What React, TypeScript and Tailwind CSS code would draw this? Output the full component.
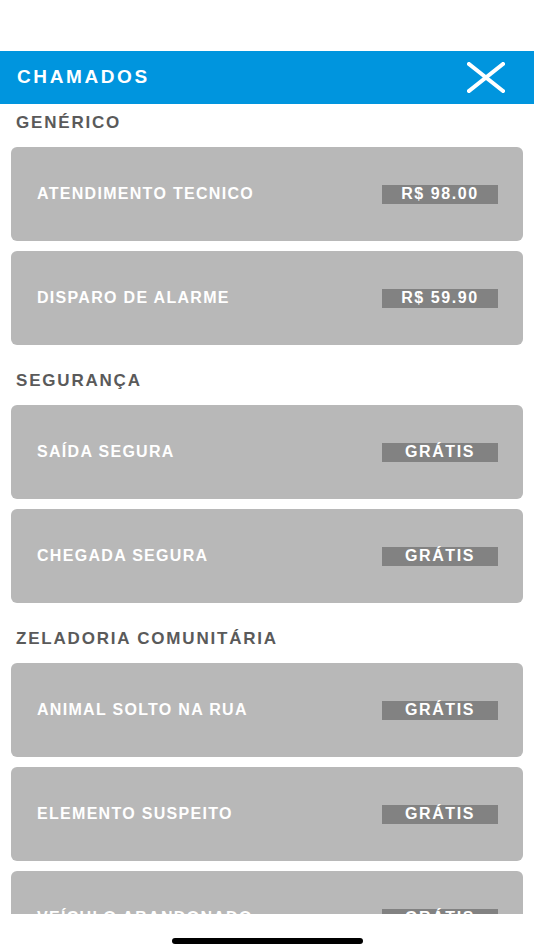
const sections = [
  {
    title: "GENÉRICO",
    items: [
      { name: "ATENDIMENTO TECNICO", price: "R$ 98.00" },
      { name: "DISPARO DE ALARME", price: "R$ 59.90" },
    ],
  },
  {
    title: "SEGURANÇA",
    items: [
      { name: "SAÍDA SEGURA", price: "GRÁTIS" },
      { name: "CHEGADA SEGURA", price: "GRÁTIS" },
    ],
  },
  {
    title: "ZELADORIA COMUNITÁRIA",
    items: [
      { name: "ANIMAL SOLTO NA RUA", price: "GRÁTIS" },
      { name: "ELEMENTO SUSPEITO", price: "GRÁTIS" },
      { name: "VEÍCULO ABANDONADO", price: "GRÁTIS" },
    ],
  },
];

export default function App() {
  return (
    <div
      className="relative h-[950px] w-[534px] overflow-hidden bg-white"
      style={{ fontFamily: '"Liberation Sans", Arial, sans-serif' }}
    >
      {/* status bar space */}
      <div className="h-[51px]" />

      {/* header */}
      <div className="flex h-[53px] items-center justify-between bg-[#0095de] pl-[17px] pr-[29px]">
        <h1 className="text-[19px] font-bold tracking-[2.6px] text-white">CHAMADOS</h1>
        <svg width="38" height="31" viewBox="0 0 38 31" fill="none">
          <path d="M2 2L36 29M36 2L2 29" stroke="white" strokeWidth="4" strokeLinecap="square" />
        </svg>
      </div>

      {/* list */}
      <div className="flex flex-col px-[11px] pt-[7px]">
        {sections.map((s, i) => (
          <div key={s.title} className={i === 0 ? "" : "mt-[24px]"}>
            <div className="h-[24px] pl-[5px] text-[17px] leading-[24px] font-bold tracking-[1.8px] text-[#5a5a5a]">
              {s.title}
            </div>
            <div className="mt-[12px] flex flex-col gap-[10px]">
              {s.items.map((it) => (
                <div
                  key={it.name}
                  className="flex h-[94px] items-center justify-between rounded-[6px] bg-[#b8b8b8] pl-[26px] pr-[25px]"
                >
                  <span className="text-[16px] font-bold tracking-[1.3px] text-white">{it.name}</span>
                  <span className="flex h-[19px] w-[116px] items-center justify-center bg-[#828282] text-[16px] font-bold tracking-[1.6px] text-white">
                    {it.price}
                  </span>
                </div>
              ))}
            </div>
          </div>
        ))}
      </div>

      {/* home indicator */}
      <div className="absolute bottom-0 left-0 right-0 flex h-[36px] justify-center bg-white pt-[24px]">
        <div className="h-[6px] w-[191px] rounded-full bg-black" />
      </div>
    </div>
  );
}
